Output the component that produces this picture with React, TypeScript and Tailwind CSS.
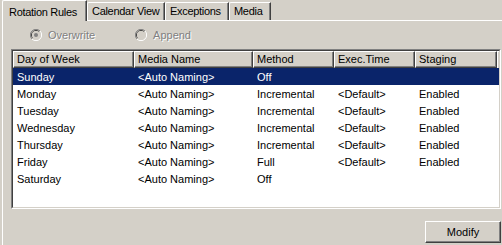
import React from 'react'

const rows = [
    { day: 'Sunday', media: '<Auto Naming>', method: 'Off', exec: '', staging: '' },
    { day: 'Monday', media: '<Auto Naming>', method: 'Incremental', exec: '<Default>', staging: 'Enabled' },
    { day: 'Tuesday', media: '<Auto Naming>', method: 'Incremental', exec: '<Default>', staging: 'Enabled' },
    { day: 'Wednesday', media: '<Auto Naming>', method: 'Incremental', exec: '<Default>', staging: 'Enabled' },
    { day: 'Thursday', media: '<Auto Naming>', method: 'Incremental', exec: '<Default>', staging: 'Enabled' },
    { day: 'Friday', media: '<Auto Naming>', method: 'Full', exec: '<Default>', staging: 'Enabled' },
    { day: 'Saturday', media: '<Auto Naming>', method: 'Off', exec: '', staging: '' },
]

const cols = ['w-[121px]', 'w-[119px]', 'w-[81px]', 'w-[81px]', 'w-[82px]']
const headers = ['Day of Week', 'Media Name', 'Method', 'Exec.Time', 'Staging']

const Radio = ({ checked }: { checked?: boolean }) => (
    <svg width="12" height="12" viewBox="0 0 12 12" className="shrink-0">
        <path d="M10 2 A5.5 5.5 0 0 0 2 10" fill="none" stroke="#808080" strokeWidth="1" />
        <path d="M9.2 2.8 A4.5 4.5 0 0 0 2.8 9.2" fill="none" stroke="#404040" strokeWidth="1" />
        <path d="M2 10 A5.5 5.5 0 0 0 10 2" fill="none" stroke="#ffffff" strokeWidth="1" />
        <path d="M2.8 9.2 A4.5 4.5 0 0 0 9.2 2.8" fill="none" stroke="#d4d0c8" strokeWidth="1" />
        <circle cx="6" cy="6" r="4" fill="#d4d0c8" />
        {checked && <circle cx="6" cy="6" r="2" fill="#808080" />}
    </svg>
)

const Tab = ({ label, active, w }: { label: string; active?: boolean; w: string }) => (
    <div
        className={
            active
                ? `${w} h-[21px] -mb-px flex items-start pt-[4px] pl-[6px] bg-[#d4d0c8] border-l border-t border-white border-r border-r-[#404040] shadow-[inset_-1px_0_0_#808080] rounded-tl-[2px] z-10 whitespace-nowrap`
                : `${w} h-[18px] flex items-start pt-[1px] pl-[4px] bg-[#d4d0c8] border-l border-t border-white border-r border-r-[#404040] shadow-[inset_-1px_0_0_#808080] rounded-tl-[2px] whitespace-nowrap`
        }
    >
        <span className="leading-[14px] tracking-[-0.3px]">{label}</span>
    </div>
)

const App = () => {
    return (
        <div className="w-[502px] h-[245px] bg-[#d4d0c8] overflow-hidden text-[11px] text-black font-['Liberation_Sans',Arial,sans-serif]">
            <div className="flex items-end h-[20px] pl-[2px] relative z-10">
                <Tab label="Rotation Rules" active w="w-[85px]" />
                <Tab label="Calendar View" w="w-[78px]" />
                <Tab label="Exceptions" w="w-[64px]" />
                <Tab label="Media" w="w-[42px]" />
            </div>
            <div className="ml-[2px] h-[225px] border-t border-l border-white pl-[8px] pr-[1px]">
                <div className="flex items-center h-[14px] mt-[7px] text-[#808080] [text-shadow:1px_1px_0_#fff]">
                    <div className="flex items-center gap-[6px] ml-[19px]">
                        <Radio checked />
                        <span>Overwrite</span>
                    </div>
                    <div className="flex items-center gap-[6px] ml-[40px]">
                        <Radio />
                        <span>Append</span>
                    </div>
                </div>
                <div className="mt-[7px] h-[160px] border border-t-[#808080] border-l-[#808080] border-b-white border-r-white">
                    <div className="h-full border border-t-[#404040] border-l-[#404040] border-b-[#d4d0c8] border-r-[#d4d0c8] bg-white">
                        <div className="flex h-[17px] bg-[#d4d0c8]">
                            {headers.map((h, i) => (
                                <div
                                    key={h}
                                    className={`${cols[i]} h-[17px] border-t border-l border-white border-r border-b border-r-[#404040] border-b-[#404040] shadow-[inset_-1px_-1px_0_#808080] pl-[3px] leading-[14px] whitespace-nowrap`}
                                >
                                    {h}
                                </div>
                            ))}
                            <div className="flex-1 border-t border-l border-white" />
                        </div>
                        {rows.map((r, i) => (
                            <div key={r.day} className={`flex h-[17px] items-center pt-px ${i === 0 ? 'bg-[#0a246a] text-white' : ''}`}>
                                <div className={`${cols[0]} pl-[4px]`}>{r.day}</div>
                                <div className={`${cols[1]} pl-[4px]`}>{r.media}</div>
                                <div className={`${cols[2]} pl-[4px]`}>{r.method}</div>
                                <div className={`${cols[3]} pl-[4px]`}>{r.exec}</div>
                                <div className={`${cols[4]} pl-[4px]`}>{r.staging}</div>
                            </div>
                        ))}
                    </div>
                </div>
                <div className="flex justify-end mt-[12px]">
                    <button className="w-[76px] h-[22px] bg-[#d4d0c8] border border-t-white border-l-white border-r-[#404040] border-b-[#404040] shadow-[inset_-1px_-1px_0_#808080] text-[11px] leading-[14px]">
                        Modify
                    </button>
                </div>
            </div>
        </div>
    )
}

export default App
